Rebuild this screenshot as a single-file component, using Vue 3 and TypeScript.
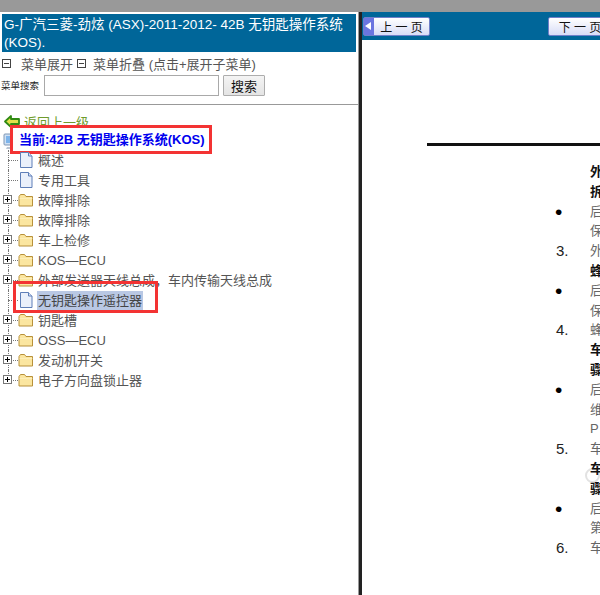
<template>
  <div class="page">
    <div class="top-bar"></div>
    <div class="main">
      <div class="left-pane">
        <div class="title">G-广汽三菱-劲炫 (ASX)-2011-2012- 42B 无钥匙操作系统 (KOS).</div>
        <div class="menu-tools">
          <span class="mini-box"></span><span class="tool-link">菜单展开</span>
          <span class="mini-box second"></span><span class="tool-link">菜单折叠 (点击+展开子菜单)</span>
        </div>
        <div class="search-row">
          <span class="search-label">菜单搜索</span>
          <input class="search-input" type="text" />
          <button class="search-btn">搜索</button>
        </div>
        <div class="tree-wrap">
          <div class="back-row">
            <svg width="16" height="13" viewBox="0 0 16 13">
              <path d="M1 6.5 7 1v3h8v5H7v3z" fill="#e2e04a" stroke="#2f8a12" stroke-width="1.8" stroke-linejoin="round" />
            </svg>
            <a class="back-link">返回上一级</a>
          </div>
          <div class="current-row">
            <svg width="16" height="17" viewBox="0 0 16 17">
              <rect x="1" y="1" width="13" height="11" rx="1" fill="#cfe0f4" stroke="#7f96b4" />
              <rect x="3" y="3" width="9" height="7" fill="#7db4ea" />
              <path d="M4 14h9l1 2H3z" fill="#b9c4d2" />
            </svg>
            <span class="current-label">当前:42B 无钥匙操作系统(KOS)</span>
          </div>
          <div v-for="(item, i) in items" :key="i" class="node" :class="{ last: i === items.length - 1 }">
            <span v-if="item.folder" class="expander"></span>
            <svg v-if="item.folder" class="icon" width="16" height="14" viewBox="0 0 16 14">
              <path d="M1 3.5 2.5 1.5h4L8 3.5h6.5V13H1z" fill="#fbe6a0" stroke="#b8913a" />
              <path d="M1.5 5.5h13V6h-13z" fill="#fff6d0" />
            </svg>
            <svg v-else class="icon" width="14" height="16" viewBox="0 0 14 16">
              <path d="M1.5.5h8l3.5 3.5v11.5H1.5z" fill="#eaf0fb" stroke="#5f7fb8" />
              <path d="M9.5.5V4H13" fill="#d5e0f3" stroke="#5f7fb8" />
            </svg>
            <span class="node-text" :class="{ selected: item.selected }">{{ item.text }}</span>
          </div>
          <div class="red-box"></div>
        </div>
      </div>
      <div class="divider"></div>
      <div class="right-pane">
        <div class="nav-bar">
          <button class="page-btn prev"><span class="arrow"></span>上 一 页</button>
          <button class="page-btn next">下 一 页</button>
        </div>
        <div class="doc">
          <span class="ring"></span>
          <div class="rule"></div>
          <div v-for="(row, i) in rows" :key="i" class="doc-row" :class="{ strong: row.strong }">
            <span class="marker" :class="{ bullet: row.marker === '•' }">{{ row.marker }}</span>
            <span class="doc-text">{{ row.text }}</span>
          </div>
        </div>
      </div>
    </div>
  </div>
</template>

<script setup lang="ts">
interface TreeItem {
  text: string
  folder: boolean
  selected?: boolean
}

interface DocRow {
  marker: string
  text: string
  strong?: boolean
}

const items: TreeItem[] = [
  { text: '概述', folder: false },
  { text: '专用工具', folder: false },
  { text: '故障排除', folder: true },
  { text: '故障排除', folder: true },
  { text: '车上检修', folder: true },
  { text: 'KOS—ECU', folder: true },
  { text: '外部发送器天线总成，车内传输天线总成', folder: true },
  { text: '无钥匙操作遥控器', folder: false, selected: true },
  { text: '钥匙槽', folder: true },
  { text: 'OSS—ECU', folder: true },
  { text: '发动机开关', folder: true },
  { text: '电子方向盘锁止器', folder: true }
]

const rows: DocRow[] = [
  { marker: '', text: '外', strong: true },
  { marker: '', text: '拆', strong: true },
  { marker: '•', text: '后' },
  { marker: '', text: '保' },
  { marker: '3.', text: '外' },
  { marker: '', text: '蜂', strong: true },
  { marker: '•', text: '后' },
  { marker: '', text: '保' },
  { marker: '4.', text: '蜂' },
  { marker: '', text: '车', strong: true },
  { marker: '', text: '骤', strong: true },
  { marker: '•', text: '后' },
  { marker: '', text: '维' },
  { marker: '', text: 'P' },
  { marker: '5.', text: '车' },
  { marker: '', text: '车', strong: true },
  { marker: '', text: '骤', strong: true },
  { marker: '•', text: '后' },
  { marker: '', text: '第' },
  { marker: '6.', text: '车' }
]
</script>

<style>
html,
body {
  margin: 0;
  overflow: hidden;
}
</style>

<style scoped>
.page {
  width: 600px;
  height: 595px;
  overflow: hidden;
  background: #fff;
  font-family: "Liberation Sans", "Noto Sans CJK SC", sans-serif;
  font-size: 13px;
  color: #555;
}

.top-bar {
  height: 12px;
  background: #999;
}

.main {
  display: flex;
  height: 583px;
}

.left-pane {
  width: 358px;
  flex-shrink: 0;
  overflow: hidden;
}

.title {
  margin: 2px 2px 0;
  padding: 2px 2px;
  height: 34px;
  line-height: 18px;
  background: #006699;
  color: #fff;
  font-size: 13.5px;
}

.menu-tools {
  display: flex;
  align-items: center;
  height: 20px;
  margin-top: 1px;
  padding-left: 2px;
  color: #555;
}

.mini-box {
  width: 7px;
  height: 7px;
  margin-right: 10px;
  border: 1px solid #444;
  background: linear-gradient(#444, #444) center / 5px 1px no-repeat;
}

.mini-box.second {
  margin-right: 7px;
}

.tool-link {
  margin-right: 4px;
}

.search-row {
  display: flex;
  align-items: center;
  height: 22px;
  margin-top: 1px;
  padding-bottom: 8px;
  border-bottom: 1px solid #999;
}

.search-label {
  width: 44px;
  padding-left: 1px;
  box-sizing: border-box;
  font-size: 9.5px;
  color: #222;
}

.search-input {
  width: 175px;
  height: 21px;
  box-sizing: border-box;
  border: 1px solid #a9a9a9;
  background: #fff;
  padding: 0;
}

.search-btn {
  width: 42px;
  height: 21px;
  margin-left: 4px;
  padding: 0;
  border: 1px solid #adadad;
  border-radius: 1px;
  background: linear-gradient(#f4f4f4, #e4e4e4);
  font-family: inherit;
  font-size: 13px;
  color: #111;
}

.tree-wrap {
  position: relative;
  padding-top: 9px;
}

.back-row {
  display: flex;
  align-items: center;
  height: 14px;
  padding-left: 4px;
  gap: 4px;
}

.back-link {
  color: #6f9c2c;
  text-decoration: underline;
}

.current-row {
  position: relative;
  height: 22px;
  padding: 5px 0 0 3px;
  box-sizing: border-box;
}

.current-label {
  position: absolute;
  left: 10px;
  top: -3px;
  width: 202px;
  height: 29px;
  box-sizing: border-box;
  border: 3px solid #f33333;
  background: #fff;
  padding-left: 6px;
  line-height: 23px;
  font-weight: bold;
  color: #0000ee;
  white-space: nowrap;
}

.node {
  position: relative;
  display: flex;
  align-items: center;
  height: 20px;
  padding-left: 18px;
}

/* dotted tree lines */
.node::before {
  content: "";
  position: absolute;
  left: 8px;
  top: 0;
  bottom: 0;
  border-left: 1px dotted #777;
}

.node::after {
  content: "";
  position: absolute;
  left: 8px;
  top: 10px;
  width: 10px;
  border-top: 1px dotted #777;
}

.node.last::before {
  bottom: 10px;
}

.expander {
  position: absolute;
  z-index: 1;
  left: 3px;
  top: 5px;
  width: 9px;
  height: 9px;
  border: 1px solid #777;
  box-sizing: border-box;
  background:
    linear-gradient(#000, #000) center / 5px 1px no-repeat,
    linear-gradient(#000, #000) center / 1px 5px no-repeat,
    #fff;
}

.icon {
  flex-shrink: 0;
  width: 16px;
}

.node-text {
  margin-left: 3px;
  padding: 0 1px;
  line-height: 19px;
  white-space: nowrap;
}

.node-text.selected {
  background: #b9c8e4;
  color: #444;
}

.red-box {
  position: absolute;
  left: 13px;
  top: 176px;
  width: 145px;
  height: 32px;
  box-sizing: border-box;
  border: 3px solid #f33333;
}

.divider {
  width: 4px;
  flex-shrink: 0;
  box-sizing: border-box;
  border-left: 1px solid #999;
  background: #222;
}

.right-pane {
  flex: 1;
  min-width: 0;
  overflow: hidden;
}

.nav-bar {
  display: flex;
  align-items: center;
  gap: 118px;
  height: 28px;
  background: #006699;
  padding-left: 1px;
}

.page-btn {
  position: relative;
  flex-shrink: 0;
  width: 67px;
  height: 19px;
  padding: 0;
  border: 1px solid #6f7fc8;
  border-radius: 2px;
  background: linear-gradient(#fff, #d8dcf6);
  font-family: inherit;
  font-size: 12px;
  color: #111;
}

.page-btn.prev {
  padding-left: 10px;
}

.page-btn.next {
  width: 76px;
  padding-right: 12px;
}

.arrow {
  position: absolute;
  left: 0;
  top: 0;
  bottom: 0;
  width: 10px;
  background: #6b75e0;
}

.arrow::after {
  content: "";
  position: absolute;
  left: 1px;
  top: 4px;
  border: 4px solid transparent;
  border-left: 0;
  border-right: 6px solid #fff;
}

.doc {
  position: relative;
  padding-top: 103px;
}

.rule {
  width: 200px;
  height: 3px;
  margin: 0 0 16px 65px;
  background: #111;
}

.doc-row {
  position: relative;
  display: flex;
  height: 19.8px;
  line-height: 19.8px;
  font-size: 13px;
  color: #666;
  white-space: nowrap;
}

.doc-row.strong {
  color: #111;
  font-weight: bold;
}

.marker {
  width: 190px;
  text-indent: 194px;
  color: #222;
  font-size: 15px;
  font-weight: normal;
  flex-shrink: 0;
}

.marker.bullet {
  text-indent: 193px;
  font-size: 21px;
  color: #000;
}

.doc-text {
  margin-left: 38px;
}

.ring {
  position: absolute;
  left: 223px;
  top: 428px;
  width: 11px;
  height: 11px;
  border: 2px solid #e2e2e2;
  border-radius: 50%;
}
</style>
